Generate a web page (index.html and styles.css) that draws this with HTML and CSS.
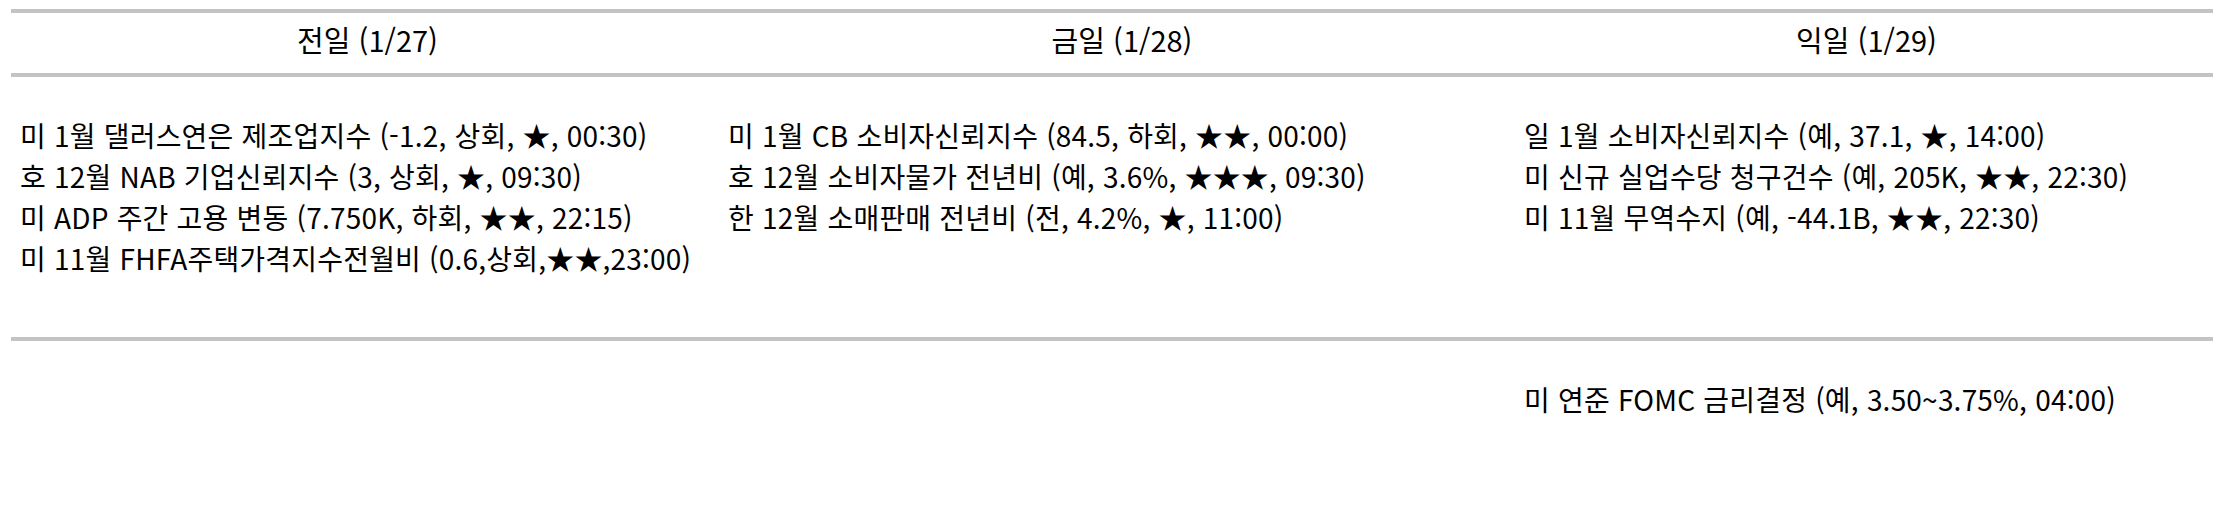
FILE: index.html
```html
<!DOCTYPE html>
<html lang="ko">
<head>
<meta charset="utf-8">
<title>경제지표 일정</title>
<link rel="stylesheet" href="styles.css">
</head>
<body>
<div class="cal">
  <div class="head">전일 (1/27)</div>
  <div class="head">금일 (1/28)</div>
  <div class="head">익일 (1/29)</div>

  <div class="cell first col1">
    <div class="line">미 1월 댈러스연은 제조업지수 (-1.2, 상회, ★, 00:30)</div>
    <div class="line">호 12월 NAB 기업신뢰지수 (3, 상회, ★, 09:30)</div>
    <div class="line">미 ADP 주간 고용 변동 (7.750K, 하회, ★★, 22:15)</div>
    <div class="line">미 11월 FHFA주택가격지수전월비 (0.6,상회,★★,23:00)</div>
  </div>
  <div class="cell first">
    <div class="line">미 1월 CB 소비자신뢰지수 (84.5, 하회, ★★, 00:00)</div>
    <div class="line">호 12월 소비자물가 전년비 (예, 3.6%, ★★★, 09:30)</div>
    <div class="line">한 12월 소매판매 전년비 (전, 4.2%, ★, 11:00)</div>
  </div>
  <div class="cell first">
    <div class="line">일 1월 소비자신뢰지수 (예, 37.1, ★, 14:00)</div>
    <div class="line">미 신규 실업수당 청구건수 (예, 205K, ★★, 22:30)</div>
    <div class="line">미 11월 무역수지 (예, -44.1B, ★★, 22:30)</div>
  </div>

  <div class="cell second col1"></div>
  <div class="cell second"></div>
  <div class="cell second">
    <div class="line">미 연준 FOMC 금리결정 (예, 3.50~3.75%, 04:00)</div>
  </div>
</div>
</body>
</html>
```

FILE: styles.css
```css
html, body {
  margin: 0;
  padding: 0;
  background: #ffffff;
}

body {
  font-family: "Noto Sans CJK KR", "Noto Sans", sans-serif;
  color: #000000;
}

.cal {
  display: grid;
  grid-template-columns: 713px 796px 693px;
  width: 2202px;
  margin: 9px 0 0 11px;
  border-top: 4px solid #c3c3c3;
}

.head {
  height: 52px;
  padding-bottom: 8px;
  display: flex;
  align-items: center;
  justify-content: center;
  font-size: 29px;
  border-bottom: 4px solid #c3c3c3;
}

.cell {
  padding: 38px 0 0 4px;
  font-size: 28px;
  line-height: 41px;
  letter-spacing: 0.2px;
  white-space: nowrap;
}

.cell.col1 {
  padding-left: 9px;
}

.cell.first {
  height: 222px;
  border-bottom: 4px solid #c3c3c3;
}

.cell.second {
  height: 150px;
}
```
